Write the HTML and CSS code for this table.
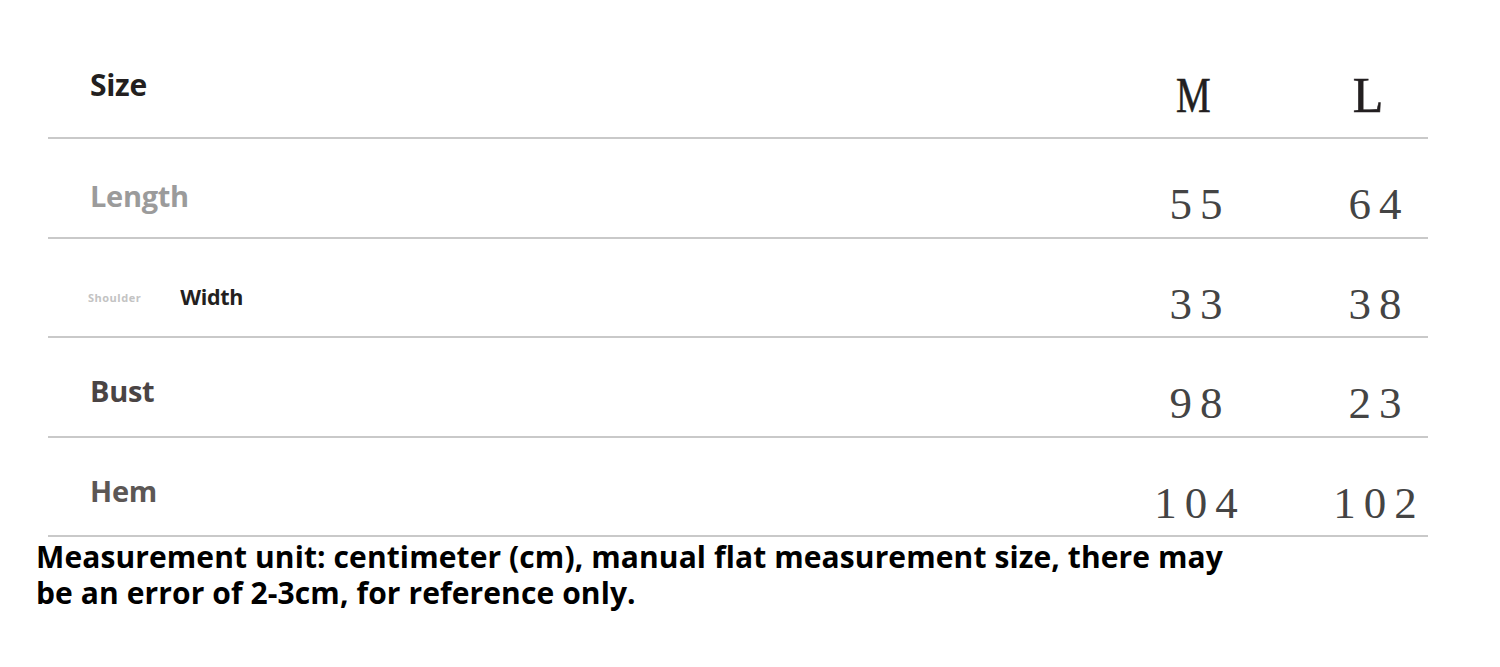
FILE: index.html
```html
<!DOCTYPE html>
<html>
<head>
<meta charset="utf-8">
<link rel="stylesheet" href="styles.css">
</head>
<body>
<div class="sheet">
  <div class="table">
    <div class="row head">
      <div class="label"><span class="lbl dark">Size</span></div>
      <div class="size-col"><span class="size-letter m">M</span></div>
      <div class="size-col"><span class="size-letter l">L</span></div>
    </div>
    <div class="row">
      <div class="label"><span class="lbl gray">Length</span></div>
      <div class="num">55</div>
      <div class="num">64</div>
    </div>
    <div class="row">
      <div class="label split"><span class="tiny">Shoulder</span><span class="lbl dark">Width</span></div>
      <div class="num">33</div>
      <div class="num">38</div>
    </div>
    <div class="row">
      <div class="label"><span class="lbl brown">Bust</span></div>
      <div class="num">98</div>
      <div class="num">23</div>
    </div>
    <div class="row">
      <div class="label"><span class="lbl taupe">Hem</span></div>
      <div class="num">104</div>
      <div class="num">102</div>
    </div>
  </div>
  <p class="note">Measurement unit: centimeter (cm), manual flat measurement size, there may be an error of 2-3cm, for reference only.</p>
</div>
</body>
</html>
```
FILE: styles.css
```css
html, body {
  margin: 0;
  padding: 0;
  background: #ffffff;
}

.sheet {
  width: 1500px;
  height: 667px;
  overflow: hidden;
}

.table {
  margin-left: 48px;
  width: 1380px;
}

.row {
  display: grid;
  grid-template-columns: 1fr 106px 106px;
  column-gap: 73px;
  height: 99.5px;
  box-sizing: border-box;
  border-bottom: 2px solid #c9c9c9;
}

.row.head {
  height: 139px;
}

.label {
  padding-left: 42px;
  display: flex;
  align-items: flex-start;
}

.lbl {
  font-family: "Open Sans", "Liberation Sans", sans-serif;
  font-weight: 700;
  font-size: 29px;
  line-height: 29px;
  letter-spacing: -0.3px;
  padding-top: 42px;
}

.head .lbl {
  padding-top: 70px;
  font-size: 30px;
  line-height: 30px;
}

.dark { color: #231f20; }
.gray { color: #9b9b9b; }
.brown { color: #4a4444; padding-top: 38px; }
.taupe { color: #5c5755; padding-top: 38px; }

.split {
  padding-left: 40px;
}

.split .lbl {
  font-size: 21.5px;
  line-height: 21px;
  padding-top: 47px;
  margin-left: 39px;
  color: #231f20;
}

.tiny {
  font-family: "Open Sans", "Liberation Sans", sans-serif;
  font-weight: 700;
  font-size: 11px;
  line-height: 11px;
  color: #c3c3c3;
  padding-top: 53px;
  letter-spacing: 0.5px;
}

.size-col {
  text-align: center;
}

.size-letter {
  display: inline-block;
  font-family: "Liberation Serif", "DejaVu Serif", serif;
  font-size: 50px;
  line-height: 50px;
  color: #231f20;
  padding-top: 70px;
  -webkit-text-stroke: 0.6px #231f20;
}

.size-letter.m { margin-left: -6px; transform: scaleX(0.78); }
.size-letter.l { margin-left: -14px; }

.num {
  font-family: "Liberation Serif", "DejaVu Serif", serif;
  font-size: 45px;
  line-height: 45px;
  letter-spacing: 8px;
  padding-left: 8px;
  text-align: center;
  color: #444444;
  padding-top: 43px;
}

.note {
  margin: 2px 0 0 36px;
  width: 1210px;
  font-family: "Open Sans", "Liberation Sans", sans-serif;
  font-weight: 700;
  font-size: 30px;
  line-height: 36px;
  letter-spacing: 0.1px;
  color: #000000;
}
```
